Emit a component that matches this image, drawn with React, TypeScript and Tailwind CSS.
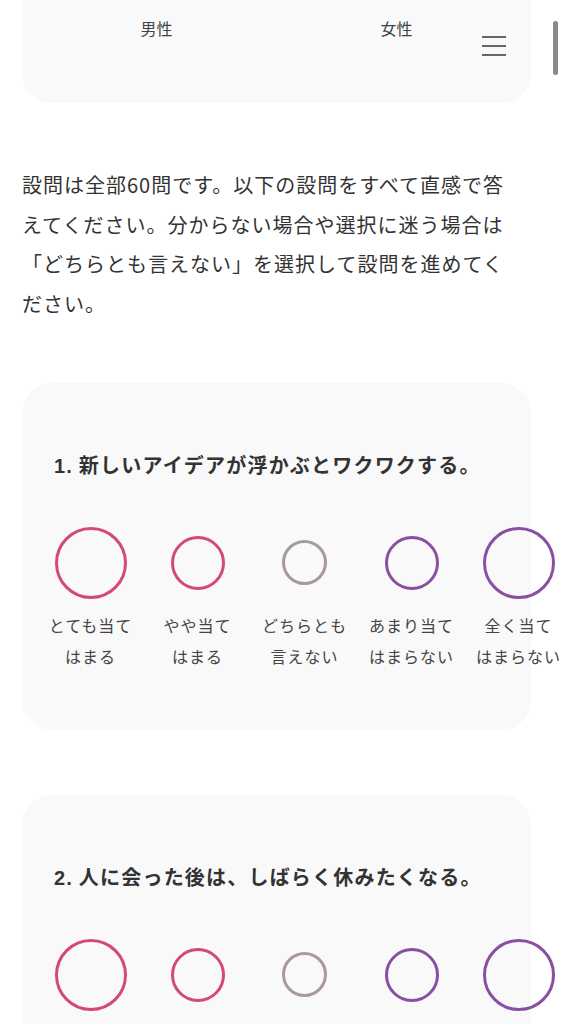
import React from "react";

type Choice = {
  size: string;
  color: string;
  lines: [string, string];
};

const choices: Choice[] = [
  { size: "w-[72px] h-[72px]", color: "border-[#d44a70]", lines: ["とても当て", "はまる"] },
  { size: "w-[54px] h-[54px]", color: "border-[#d44a70]", lines: ["やや当て", "はまる"] },
  { size: "w-[45px] h-[45px]", color: "border-[#a8999e]", lines: ["どちらとも", "言えない"] },
  { size: "w-[54px] h-[54px]", color: "border-[#8a4fa3]", lines: ["あまり当て", "はまらない"] },
  { size: "w-[72px] h-[72px]", color: "border-[#8a4fa3]", lines: ["全く当て", "はまらない"] },
];

const font = "font-['Noto_Sans_CJK_JP','Noto_Sans',sans-serif]";

const Question: React.FC<{ num: number; text: string; showLabels?: boolean }> = ({
  num,
  text,
  showLabels = true,
}) => {
  return (
    <div className="mx-[22px] w-[509px] rounded-[30px] bg-[#f9f9f9] pt-[67px] pb-[58px]">
      <h2 className="pl-[32px] text-[20px] leading-[30px] font-bold text-[#333] tracking-[0.06em]">
        <span className="font-['Liberation_Sans',sans-serif]">{num}.</span> {text}
      </h2>
      <div className="mt-[45px] ml-[15px] flex w-[535px]">
        {choices.map((c, i) => (
          <div key={i} className="flex w-[107px] shrink-0 flex-col items-center">
            <div className="flex h-[73px] items-center justify-center">
              <div className={`${c.size} ${c.color} rounded-full border-[3px]`}></div>
            </div>
            {/* labels of the lower card sit below the fold */}
            {showLabels ? (
              <div className="mt-[11px] text-center text-[16px] leading-[31px] tracking-[0.06em] whitespace-nowrap text-[#444]">
                <div>{c.lines[0]}</div>
                <div>{c.lines[1]}</div>
              </div>
            ) : (
              <div className="mt-[11px] h-[62px]"></div>
            )}
          </div>
        ))}
      </div>
    </div>
  );
};

export default function App() {
  return (
    <div className={`relative h-[1024px] w-[562px] overflow-hidden bg-white ${font}`}>
      {/* gender card, scrolled partly off screen */}
      <div className="mx-[22px] flex h-[103px] w-[509px] justify-center rounded-b-[30px] bg-[#f9f9f9]">
        <div className="flex w-[480px] pt-[16px]">
          <div className="w-[240px] text-center text-[16px] leading-[24px] text-[#444]">男性</div>
          <div className="w-[240px] text-center text-[16px] leading-[24px] text-[#444]">女性</div>
        </div>
      </div>

      <p className="mx-[22px] mt-[62px] text-[20px] leading-[39.5px] tracking-[0.05em] whitespace-nowrap text-[#333]">
        設問は全部60問です。以下の設問をすべて直感で答
        <br />
        えてください。分からない場合や選択に迷う場合は
        <br />
        「どちらとも言えない」を選択して設問を進めてく
        <br />
        ださい。
      </p>

      <div className="mt-[60px] flex flex-col gap-[65px]">
        <Question num={1} text="新しいアイデアが浮かぶとワクワクする。" />
        <Question num={2} text="人に会った後は、しばらく休みたくなる。" showLabels={false} />
      </div>

      {/* menu button */}
      <button className="absolute top-[36px] left-[482px] flex w-[24px] flex-col gap-[7px]">
        <span className="block h-[2px] w-[24px] bg-[#666]"></span>
        <span className="block h-[2px] w-[24px] bg-[#666]"></span>
        <span className="block h-[2px] w-[24px] bg-[#666]"></span>
      </button>

      {/* scrollbar */}
      <div className="absolute top-[21px] left-[553px] h-[54px] w-[5px] rounded-full bg-[#8a8a8a]"></div>
    </div>
  );
}
